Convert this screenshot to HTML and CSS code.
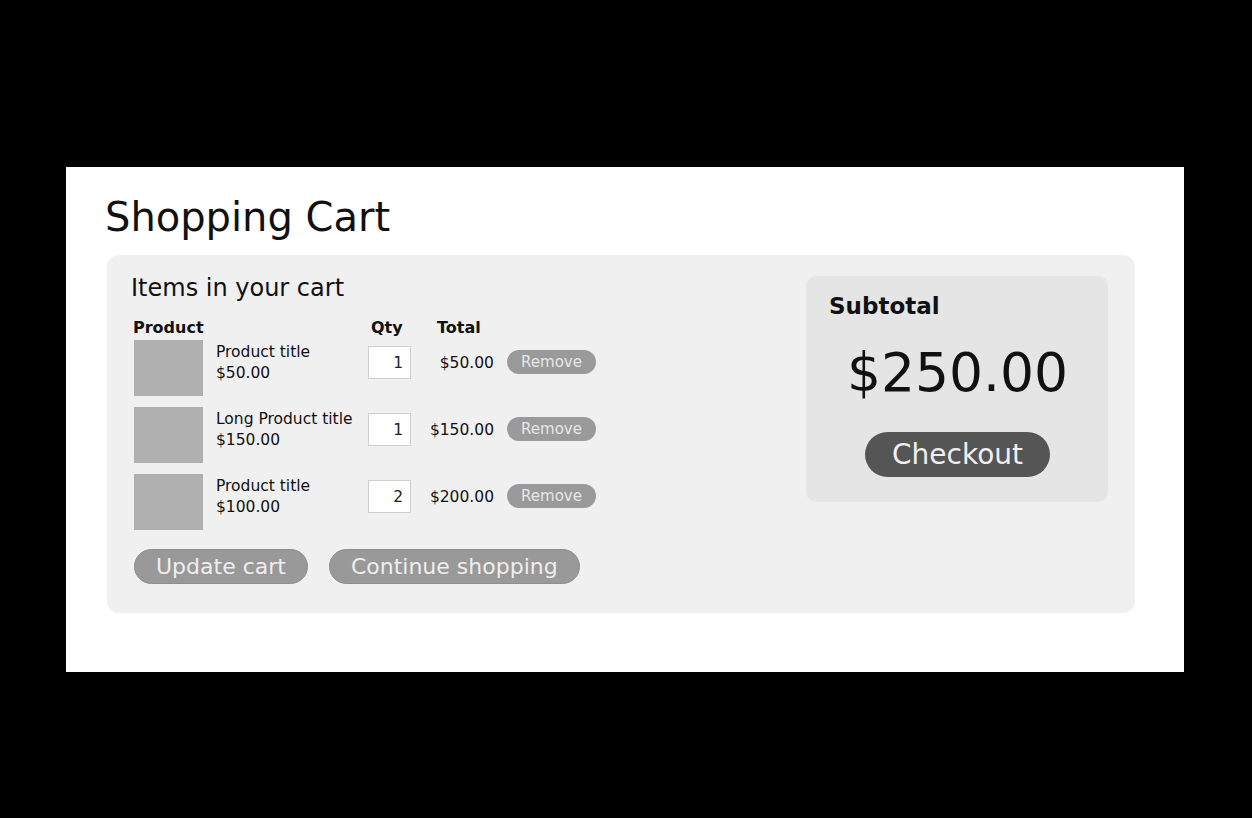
FILE: index.html
```html
<!DOCTYPE html>
<html lang="en">
<head>
<meta charset="utf-8">
<title>Shopping Cart</title>
<link rel="stylesheet" href="styles.css">
</head>
<body>
<main class="panel">
  <h1 class="page-title">Shopping Cart</h1>
  <section class="cart">
    <div class="items">
      <h2 class="items-title">Items in your cart</h2>
      <div class="grid">
        <div class="th th-product">Product</div>
        <div class="th"></div>
        <div class="th th-qty">Qty</div>
        <div class="th th-total">Total</div>
        <div class="th"></div>

        <div class="thumb"></div>
        <div class="info"><div>Product title</div><div>$50.00</div></div>
        <div class="qty"><input class="qty-input" type="text" value="1"></div>
        <div class="total">$50.00</div>
        <div class="rm"><button class="remove">Remove</button></div>

        <div class="thumb"></div>
        <div class="info"><div>Long Product title</div><div>$150.00</div></div>
        <div class="qty"><input class="qty-input" type="text" value="1"></div>
        <div class="total">$150.00</div>
        <div class="rm"><button class="remove">Remove</button></div>

        <div class="thumb"></div>
        <div class="info"><div>Product title</div><div>$100.00</div></div>
        <div class="qty"><input class="qty-input" type="text" value="2"></div>
        <div class="total">$200.00</div>
        <div class="rm"><button class="remove">Remove</button></div>
      </div>
      <div class="actions">
        <button class="pill">Update cart</button>
        <button class="pill">Continue shopping</button>
      </div>
    </div>
    <aside class="summary">
      <h3 class="summary-title">Subtotal</h3>
      <div class="summary-amount">$250.00</div>
      <button class="checkout">Checkout</button>
    </aside>
  </section>
</main>
</body>
</html>
```
FILE: styles.css
```css
* { box-sizing: border-box; }

html, body {
  margin: 0;
  background: #000;
}

body {
  padding-top: 167px;
  font-family: "DejaVu Sans", "Liberation Sans", sans-serif;
  color: #111;
}

.panel {
  width: 1118px;
  height: 505px;
  margin-left: 66px;
  background: #fff;
  padding: 26px 49px 0 41px;
}

.page-title {
  margin: 0 0 14px -2px;
  font-size: 40px;
  font-weight: normal;
  line-height: 48px;
  color: #111;
}

.cart {
  display: flex;
  align-items: flex-start;
  background: #f0f0f0;
  border-radius: 12px;
  padding: 21px 27px 29px 24px;
}

.items {
  flex: 1;
}

.items-title {
  margin: -1px 0 16px 0;
  font-size: 24px;
  font-weight: normal;
  line-height: 26px;
}

.grid {
  display: grid;
  grid-template-columns: 83px 154px 43px 84px 101px;
  grid-auto-rows: auto;
  row-gap: 11px;
  font-size: 15.5px;
}

.th {
  font-size: 16px;
  font-weight: bold;
  line-height: 22px;
  margin-bottom: -10px;
}

.th-product { padding-left: 2px; }
.th-qty { padding-left: 3px; }
.th-total { padding-left: 26px; }

.thumb {
  width: 69px;
  height: 56px;
  margin-left: 3px;
  background: #b0b0b0;
}

.info {
  margin-top: 2px;
  padding-left: 2px;
  line-height: 20.5px;
}

.qty {
  padding-top: 6px;
}

.qty-input {
  display: block;
  width: 43px;
  height: 33px;
  margin: 0;
  border: 1px solid #cfcfcf;
  background: #fff;
  text-align: right;
  padding: 0 7px 0 0;
  font-family: "DejaVu Sans", sans-serif;
  font-size: 15.5px;
  color: #222;
  outline: none;
}

.total {
  margin-top: 13px;
  line-height: 20px;
  text-align: right;
  padding-right: 1px;
}

.rm {
  padding-top: 10px;
  padding-left: 12px;
}

.remove {
  display: block;
  width: 89px;
  height: 24px;
  padding: 0;
  border: none;
  border-radius: 12px;
  background: #9a9a9a;
  color: #e6e6e6;
  font-family: "DejaVu Sans", sans-serif;
  font-size: 15px;
  line-height: 24px;
}

.actions {
  display: flex;
  gap: 21px;
  margin-top: 19px;
  margin-left: 3px;
}

.pill {
  height: 35px;
  padding: 0 21px;
  border: 1px solid #8e8e8e;
  border-radius: 18px;
  background: #999;
  color: #eee;
  font-family: "DejaVu Sans", sans-serif;
  font-size: 22px;
  line-height: 33px;
}

.summary {
  width: 302px;
  background: #e5e5e5;
  border-radius: 10px;
  padding: 16px 22px 25px 23px;
  display: flex;
  flex-direction: column;
}

.summary-title {
  margin: 0;
  font-size: 23px;
  font-weight: bold;
  line-height: 28px;
}

.summary-amount {
  margin-top: 21px;
  font-size: 53.5px;
  line-height: 64px;
  text-align: center;
}

.checkout {
  align-self: center;
  margin-top: 27px;
  height: 45px;
  padding: 0 27px;
  border: none;
  border-radius: 23px;
  background: #555;
  color: #f0f0f0;
  font-family: "DejaVu Sans", sans-serif;
  font-size: 28px;
  line-height: 45px;
}
```
